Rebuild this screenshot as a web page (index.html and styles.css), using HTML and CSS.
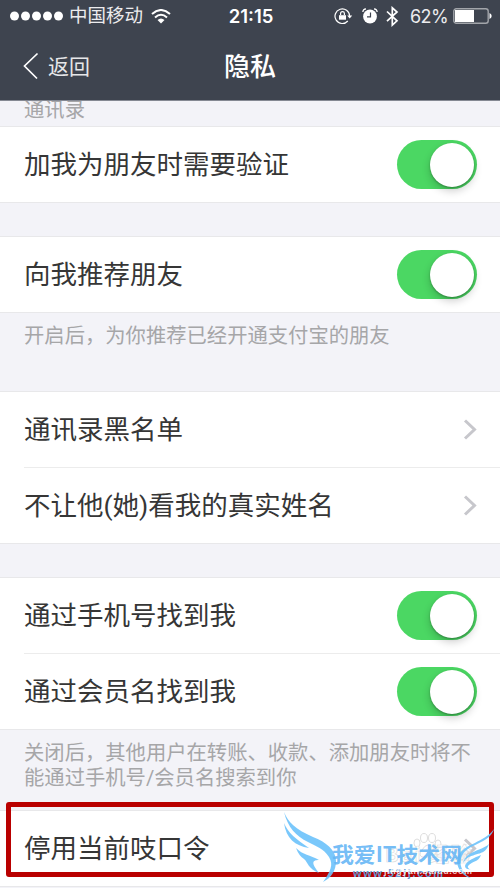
FILE: index.html
```html
<!DOCTYPE html>
<html lang="zh-CN">
<head>
<meta charset="utf-8">
<title>隐私</title>
<link rel="stylesheet" href="styles.css">
</head>
<body>
<main class="phone">
  <header class="header">
    <div class="status">
      <div class="carrier">
        <svg class="dots" width="54" height="10" viewBox="0 0 54 10" fill="#fff"><circle cx="4.5" cy="5" r="4.5"/><circle cx="15.5" cy="5" r="4.5"/><circle cx="26.5" cy="5" r="4.5"/><circle cx="37.5" cy="5" r="4.5"/><circle cx="48.5" cy="5" r="4.5"/></svg>
        <span class="operator">中国移动</span>
        <svg class="wifi" width="20" height="15" viewBox="0 0 20 15" fill="none" stroke="#fff" stroke-width="2"><path d="M1 5Q10-3 19 5M4 8.5Q10 3 16 8.5"/><path d="M6.5 11Q10 8 13.5 11L10 14.5Z" fill="#fff" stroke="none"/></svg>
      </div>
      <time class="time">21:15</time>
      <div class="indicators">
        <svg class="lock" width="19" height="17" viewBox="0 0 19 17" fill="none" stroke="#fff"><path d="M13.8 13A7.3 7.3 0 1 1 15.6 8" stroke-width="1.2"/><path d="M13.2 7.5h5l-2.5 3Z" fill="#fff" stroke="none"/><path d="M5 7.2h7v4.5H5z" fill="#fff" stroke="none"/><path d="M6.6 7V5.5a1.9 1.9 0 0 1 3.8 0V7" stroke-width="1.2"/></svg>
        <svg class="alarm" width="16" height="16" viewBox="0 0 16 16"><circle cx="8" cy="8.5" r="6.9" fill="#fff"/><path d="M.8 4Q1 1 4 .8M12 .8q3 .2 3.2 3.2" stroke="#fff" fill="none" stroke-width="1.2"/><path d="M8.5 4.5v4.3H5" stroke="#3e444f" fill="none" stroke-width="1.2"/></svg>
        <svg class="bluetooth" width="13" height="21" viewBox="0 0 13 21" fill="none" stroke="#fff" stroke-width="1.7"><path d="m1 5.5 10 9.3-4.7 4.3V1.8L11 6 1 15.2"/></svg>
        <span class="percent">62%</span>
        <svg class="battery" width="39" height="16" viewBox="0 0 39 16"><rect x=".8" y=".8" width="34.4" height="14.4" rx="2.5" fill="none" stroke="#a2a5aa" stroke-width="1.4"/><path d="M2 2h19v12H2z" fill="#fff"/><path d="M36.5 5q2.2 1 2.2 3t-2.2 3Z" fill="#fff"/></svg>
      </div>
    </div>
    <nav class="navbar">
      <a class="back"><svg width="16" height="28" viewBox="0 0 16 28" fill="none" stroke="#fff" stroke-width="1.7"><path d="M14.5 1.5 1.5 14l12.5 12.5"/></svg><span>返回</span></a>
      <h1 class="title">隐私</h1>
    </nav>
  </header>

  <p class="note note-first"><span>通讯录</span></p>
  <section class="group"><div class="row"><span>加我为朋友时需要验证</span><i class="switch"></i></div></section>
  <div class="spacer"></div>
  <section class="group"><div class="row"><span>向我推荐朋友</span><i class="switch"></i></div></section>
  <p class="note note-recommend">开启后，为你推荐已经开通支付宝的朋友</p>
  <section class="group">
    <div class="row"><span>通讯录黑名单</span><svg class="chevron" viewBox="0 0 14 21"><path d="m2 1.5 9.5 9L2 19.5"/></svg></div>
    <div class="row"><span>不让他(她)看我的真实姓名</span><svg class="chevron" viewBox="0 0 14 21"><path d="m2 1.5 9.5 9L2 19.5"/></svg></div>
  </section>
  <div class="spacer"></div>
  <section class="group">
    <div class="row"><span>通过手机号找到我</span><i class="switch"></i></div>
    <div class="row"><span>通过会员名找到我</span><i class="switch"></i></div>
  </section>
  <p class="note note-search">关闭后，其他用户在转账、收款、添加朋友时将不<br>能通过手机号/会员名搜索到你</p>
  <section class="group"><div class="row"><span>停用当前吱口令</span><svg class="chevron" viewBox="0 0 14 21"><path d="m2 1.5 9.5 9L2 19.5"/></svg></div></section>

  <div class="highlight"></div>
  <svg class="watermark" width="230" height="88" viewBox="0 0 230 88">
    <g fill="#fff" stroke="#dedede"><ellipse cx="147" cy="43" rx="3" ry="4"/><ellipse cx="154" cy="38" rx="3.5" ry="4.5"/><ellipse cx="162" cy="38" rx="3.5" ry="4.5"/><ellipse cx="168" cy="44" rx="3" ry="4"/><path d="M158 45q-3 0-6 5-4 5 0 7h12q4-2 0-7-3-5-6-5Z"/></g>
    <text class="experience" x="115" y="62" textLength="86">Bai 经验</text>
    <g fill="#6cc2fb" fill-opacity=".9">
      <path d="M14 12C18 22 25 29 43 37C56 42 66 50 66 61C66 71 61 78 53 82C60 72 64 65 59 57C54 49 46 46 38 42C26 36 18 28 14 12Z"/>
      <path d="M14 23C18 33 26 39 39 48C25 46 16 38 14 23Z"/>
      <path d="M26 48C33 55 40 55 49 60C42 60 41 63 49 73C38 69 38 62 34 59Q29 56 26 48Z"/>
      <path d="M224 29C220 43 199 44 193 54C187 64 193 74 201 78C193 77 184 66 188 56C195 43 214 43 224 29ZM219 44C215 56 206 52 196 59L193 63C197 50 210 52 219 44ZM211 55C208 63 203 60 198 66Q197 68 201 70C190 68 195 61 211 55Z"/>
    </g>
    <text class="brand" x="62" y="62" textLength="130" lengthAdjust="spacingAndGlyphs">我爱IT技术网</text>
    <text class="site" x="83" y="77" textLength="90">www.52ij.com</text>
    <text class="source" x="114" y="74" textLength="88">jingyan.baidu.com</text>
  </svg>
</main>
</body>
</html>
```
FILE: styles.css
```css
* { box-sizing: border-box; }
body { margin: 0; background: #f3f3f8; color: #363636; font-family: Roboto, "Noto Sans CJK SC", sans-serif; }
.phone { position: relative; width: 500px; height: 888px; overflow: hidden; }
.header { height: 101px; background: #3e444f; color: #fff; border-bottom: 1px solid #858993; }
.status { height: 32px; display: grid; grid-template-columns: 1fr auto 1fr; align-items: center; padding: 0 8px 0 10px; font-size: 18.5px; line-height: 31px; }
.carrier, .indicators { display: flex; align-items: center; }
.operator { margin: 1px 8px 0 5px; color: #ececee; }
.time { font-family: Inter, sans-serif; font-weight: 600; font-size: 18.5px; }
.indicators { justify-content: flex-end; }
.alarm { margin: 0 8px 0 9px; }
.bluetooth { margin-right: 11px; }
.percent { font-family: Inter, sans-serif; font-size: 18px; letter-spacing: -.6px; margin-right: 5px; color: #ececee; }
.navbar { height: 68px; display: grid; grid-template-columns: 1fr auto 1fr; align-items: center; padding: 0 23px; }
.back { display: flex; align-items: center; gap: 9px; font-size: 21px; line-height: 32px; color: #e6e7e9; }
.back span { margin-top: 2px; }
.title { margin: 1px 0 0; font-size: 26px; line-height: 38px; font-weight: 500; }
.note { margin: 0; padding: 0 24px; color: #a6a6a8; font-size: 20.32px; line-height: 25px; white-space: nowrap; }
.note-first { height: 25px; overflow: hidden; }
.note-first span { display: block; margin-top: -3px; }
.note-recommend { height: 78px; padding-top: 11px; }
.note-search { height: 80px; padding-top: 11px; }
.spacer { height: 33px; }
.group { background: #fff; border-top: 1px solid #e8e8ea; border-bottom: 1px solid #e8e8ea; }
.row { height: 75px; display: flex; align-items: center; justify-content: space-between; margin-left: 24px; padding-right: 23px; font-size: 26.5px; line-height: 40px; white-space: nowrap; }
.row + .row { height: 76px; border-top: 1px solid #ececec; }
.switch { width: 80px; height: 49px; border-radius: 25px; background: #4bd763; display: flex; justify-content: flex-end; align-items: center; padding: 0 3px; }
.switch::after { content: ""; width: 44px; height: 44px; border-radius: 50%; background: #fff; box-shadow: 0 4px 9px #0003, 0 1px 2px #0004; }
.chevron { width: 14px; height: 21px; fill: none; stroke: #c7c7cc; stroke-width: 3; }
.highlight { position: absolute; left: 6px; top: 802px; width: 488px; height: 75px; border: 5px solid #b90000; border-radius: 3px; }
.watermark { position: absolute; left: 270px; top: 800px; }
.experience { font: bold 20px "Noto Sans CJK SC", sans-serif; fill: #fff; stroke: #ddd; stroke-width: .7px; }
.brand { font: 700 21px "Noto Sans CJK SC", sans-serif; fill: #64b5f5; fill-opacity: .9; }
.site { font: bold 11px "Liberation Sans", sans-serif; fill: #629bd3; }
.source { font: bold 9px "Liberation Sans", sans-serif; fill: #fff; fill-opacity: .8; }
```
